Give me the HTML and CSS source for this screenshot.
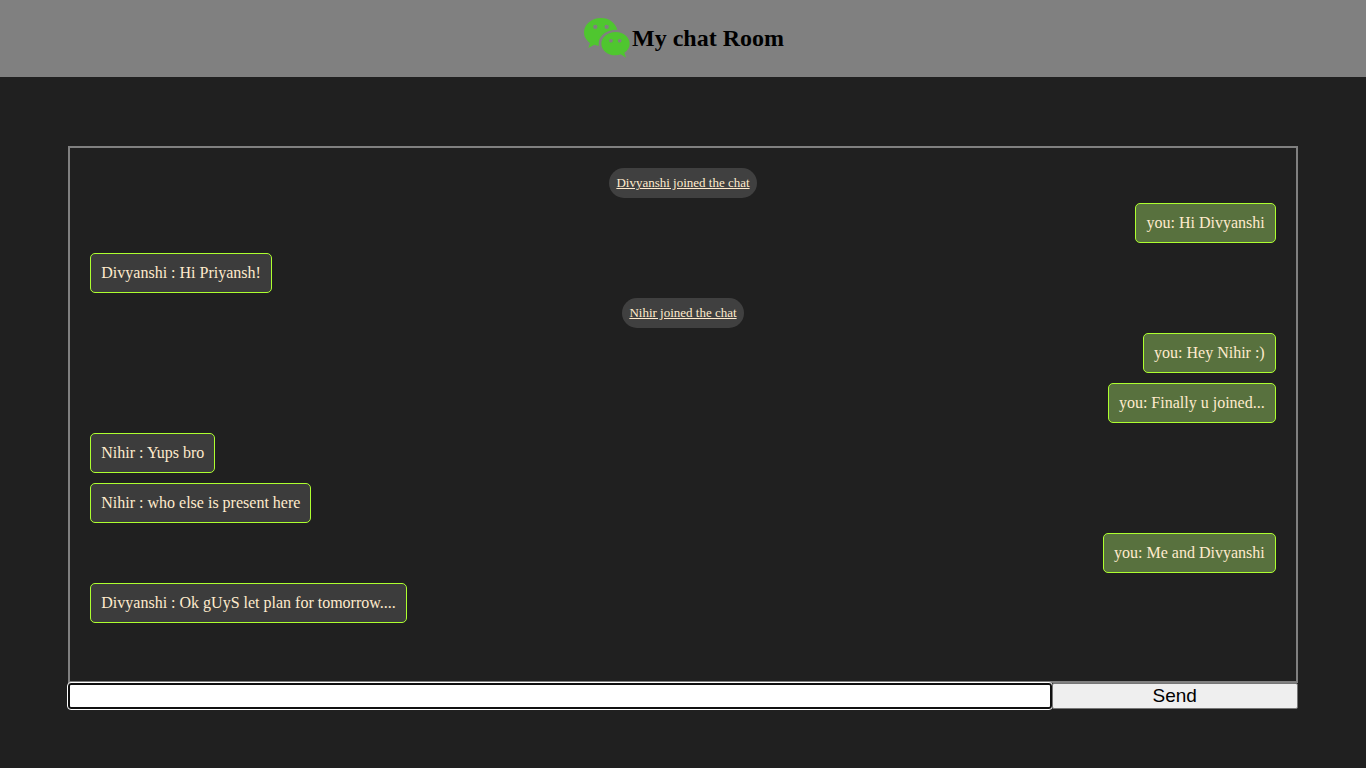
FILE: index.html
```html
<!DOCTYPE html>
<html lang="en">
<head>
<meta charset="utf-8">
<meta name="viewport" content="width=device-width, initial-scale=1">
<title>My chat Room</title>
<link rel="stylesheet" href="styles.css">
</head>
<body>
<header class="header">
  <svg class="logo" viewBox="0 0 138 123" aria-hidden="true">
    <path fill="#4fc62f" fill-rule="evenodd" d="M51 0C23 0 0 19 0 43c0 14 7 24 18 32l-5 15 18-10c5 2 9 3 14 3C40 57 63 35 100 35 94 14 75 0 51 0zM34 20a6.500 6.500 0 1 1 0 13 6.500 6.500 0 0 1 0-13zM68 20a6.500 6.500 0 1 1 0 13 6.500 6.500 0 0 1 0-13z"/>
    <path fill="#4fc62f" fill-rule="evenodd" d="M95 42C71 42 52 58 52 77s19 35 43 35c6 0 11-1 15-3l16 10-5-15c10-7 16-16 16-27 0-19-18-35-42-35zM81 63a5.500 5.500 0 1 1 0 11 5.500 5.500 0 0 1 0-11zM107 63a5.500 5.500 0 1 1 0 11 5.500 5.500 0 0 1 0-11z"/>
  </svg>
  <h1 class="title">My chat Room</h1>
</header>
<main class="room">
  <section class="messages" aria-label="Messages">
    <p class="notice">Divyanshi joined the chat</p>
    <p class="message sent">you: Hi Divyanshi</p>
    <p class="message">Divyanshi : Hi Priyansh!</p>
    <p class="notice">Nihir joined the chat</p>
    <p class="message sent">you: Hey Nihir :)</p>
    <p class="message sent">you: Finally u joined...</p>
    <p class="message">Nihir : Yups bro</p>
    <p class="message">Nihir : who else is present here</p>
    <p class="message sent">you: Me and Divyanshi</p>
    <p class="message">Divyanshi : Ok gUyS let plan for tomorrow....</p>
  </section>
  <form class="composer">
    <input class="entry" type="text" aria-label="Message" autocomplete="off" autofocus>
    <button class="send" type="button">Send</button>
  </form>
</main>
</body>
</html>
```
FILE: styles.css
```css
* {
  box-sizing: border-box;
}

body {
  margin: 0;
  min-height: 100vh;
  background: #202020;
  font-family: "Liberation Serif", "Times New Roman", serif;
}

.header {
  display: flex;
  align-items: center;
  justify-content: center;
  gap: 2px;
  padding: 18px 0 18px 2px;
  background: #808080;
}

.logo {
  width: 46px;
  height: 41px;
}

.title {
  margin: 0;
  padding-bottom: 2px;
  font-size: 24px;
  line-height: 28px;
  color: #000;
}

.room {
  width: 90%;
  margin: 69px auto 0;
}

.messages {
  display: flex;
  flex-direction: column;
  align-items: flex-start;
  min-height: calc(70vh - 1px);
  padding: 20px;
  border: 2px solid #808080;
}

.notice {
  align-self: center;
  margin: 0;
  padding: 7px;
  border-radius: 15px;
  background: #404040;
  color: #ffebcd;
  font-size: 13px;
  line-height: 16px;
  text-decoration: underline;
}

.message {
  margin: 5px 0;
  padding: 10px;
  border: 1px solid #adff2f;
  border-radius: 5px;
  background: #3c3c3c;
  color: #ffebcd;
  font-size: 16px;
  line-height: 18px;
}

.sent {
  align-self: flex-end;
  background: #58713e;
}

.composer {
  display: flex;
  height: 26px;
}

.entry {
  width: 80%;
  padding: 0 4px;
  border: 2px solid #101010;
  border-radius: 3px;
  outline: 1px solid #fff;
  background: #fff;
  font-family: "Liberation Sans", Arial, sans-serif;
  font-size: 16px;
  caret-color: transparent;
}

.send {
  width: 20%;
  padding: 0;
  border: 1px solid #767676;
  border-radius: 2px;
  background: #efefef;
  color: #000;
  font-family: "Liberation Sans", Arial, sans-serif;
  font-size: 19px;
  line-height: 22px;
}
```
